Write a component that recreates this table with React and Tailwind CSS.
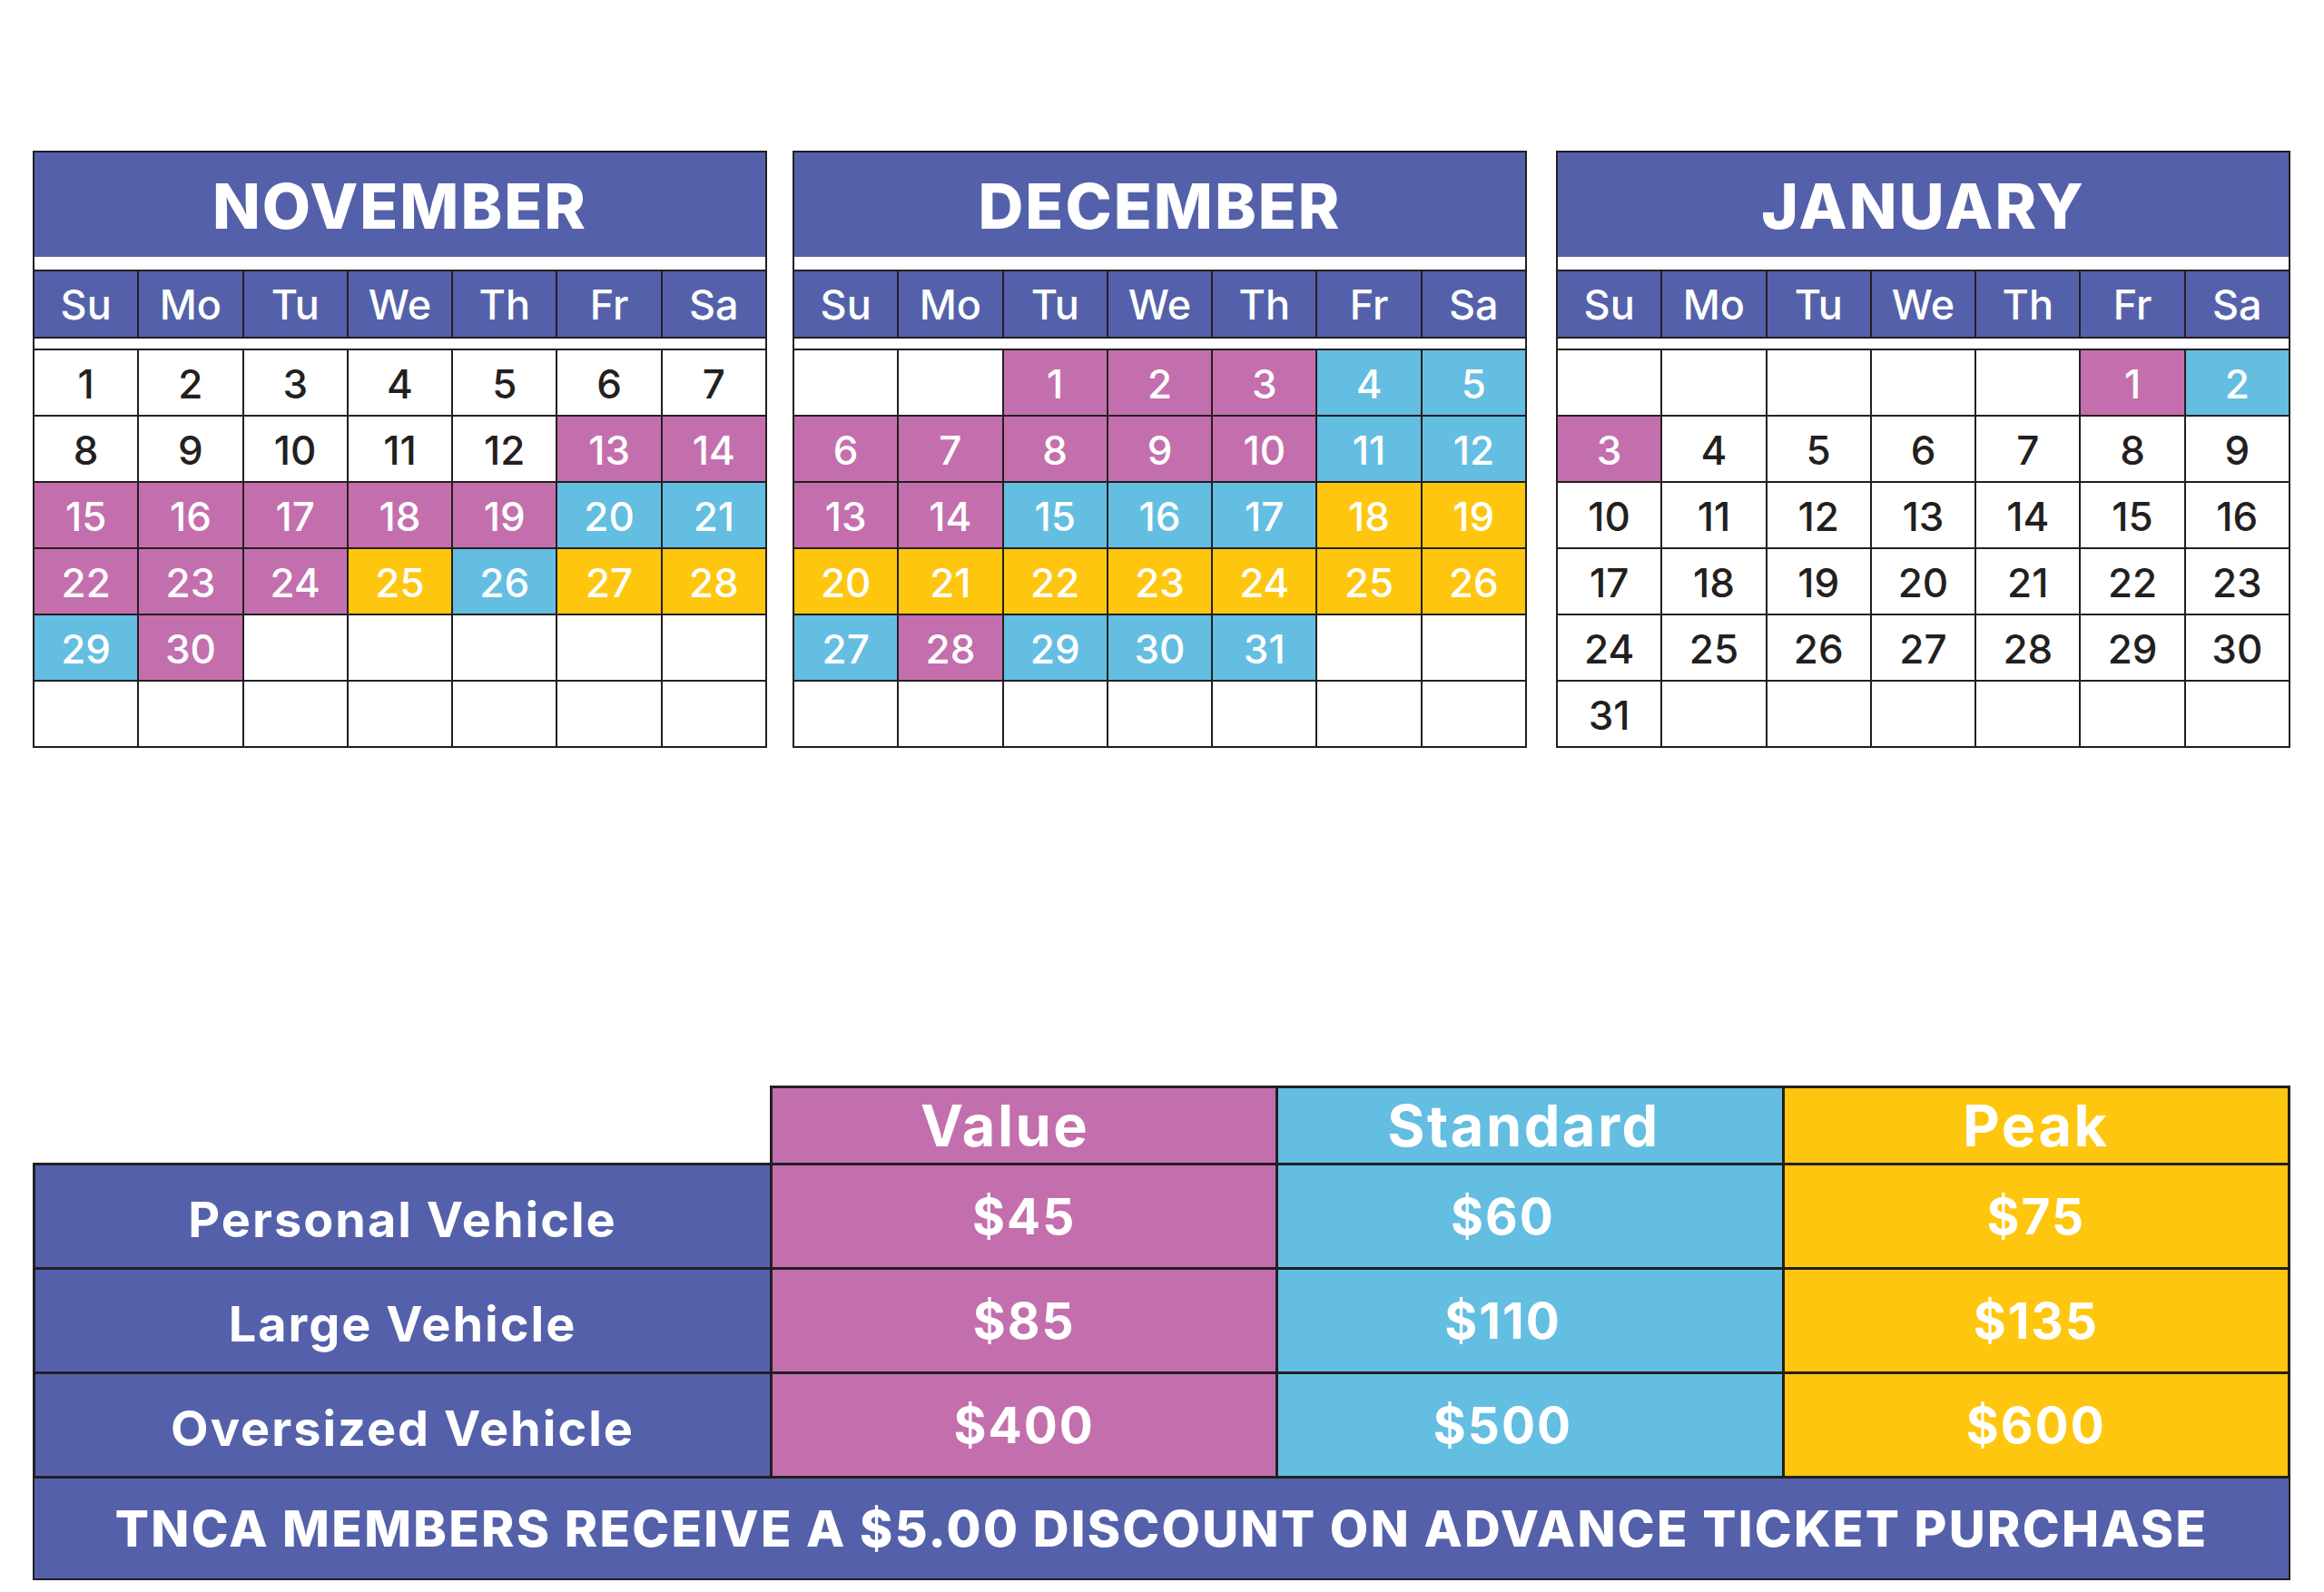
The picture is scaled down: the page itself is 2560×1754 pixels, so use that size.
const M = 'bg-[#c46fad] text-white'
const C = 'bg-[#63bee1] text-white'
const Y = 'bg-[#fec60e] text-white'
const W = 'bg-white text-[#231f20]'

const DAYS = ['Su', 'Mo', 'Tu', 'We', 'Th', 'Fr', 'Sa']

// each month: first weekday offset, number of days, colour per day (default white)
const MONTHS = [
  {
    name: 'NOVEMBER',
    offset: 0,
    length: 30,
    colors: {
      13: M, 14: M,
      15: M, 16: M, 17: M, 18: M, 19: M, 20: C, 21: C,
      22: M, 23: M, 24: M, 25: Y, 26: C, 27: Y, 28: Y,
      29: C, 30: M,
    },
  },
  {
    name: 'DECEMBER',
    offset: 2,
    length: 31,
    colors: {
      1: M, 2: M, 3: M, 4: C, 5: C,
      6: M, 7: M, 8: M, 9: M, 10: M, 11: C, 12: C,
      13: M, 14: M, 15: C, 16: C, 17: C, 18: Y, 19: Y,
      20: Y, 21: Y, 22: Y, 23: Y, 24: Y, 25: Y, 26: Y,
      27: C, 28: M, 29: C, 30: C, 31: C,
    },
  },
  {
    name: 'JANUARY',
    offset: 5,
    length: 31,
    colors: { 1: M, 2: C, 3: M },
  },
]

function buildCells(month) {
  const cells = []
  for (let i = 0; i < 42; i++) {
    const day = i - month.offset + 1
    if (day >= 1 && day <= month.length) {
      cells.push({ day, cls: month.colors[day] ?? W })
    } else {
      cells.push({ day: null, cls: W })
    }
  }
  return cells
}

function MonthCalendar({ month, className }) {
  const cells = buildCells(month)
  return (
    <div className={`w-[809px] shrink-0 border-2 border-[#231f20] bg-white ${className}`}>
      <div className="flex h-[115px] items-center justify-center bg-[#5461aa] pt-[4px]">
        <span className="text-[69px] font-extrabold leading-none tracking-[2px] text-white">
          {month.name}
        </span>
      </div>
      <div className="h-[14px] bg-white" />
      <div className="grid grid-cols-7 gap-[2px] border-y-2 border-[#231f20] bg-[#231f20]">
        {DAYS.map((d) => (
          <div
            key={d}
            className="flex h-[72px] items-center justify-center bg-[#5461aa] pt-[2px] text-[45px] font-medium text-white"
          >
            {d}
          </div>
        ))}
      </div>
      <div className="h-[11px] bg-white" />
      <div className="grid grid-cols-7 gap-[2px] border-t-2 border-[#231f20] bg-[#231f20]">
        {cells.map((c, i) => (
          <div
            key={i}
            className={`flex h-[71px] items-center justify-center pt-[2px] text-[44px] font-medium ${c.cls}`}
          >
            {c.day}
          </div>
        ))}
      </div>
    </div>
  )
}

const ROWS = [
  { label: 'Personal Vehicle', prices: ['$45', '$60', '$75'] },
  { label: 'Large Vehicle', prices: ['$85', '$110', '$135'] },
  { label: 'Oversized Vehicle', prices: ['$400', '$500', '$600'] },
]

// the artwork's labels are not quite centred in the Value / Standard columns
const TIERS = [
  { name: 'Value', cls: 'bg-[#c46fad]', head: 'pr-[42px]', price: '' },
  { name: 'Standard', cls: 'bg-[#63bee1]', head: 'pr-[14px]', price: 'pr-[60px]' },
  { name: 'Peak', cls: 'bg-[#fec60e]', head: '', price: '' },
]

function PriceTable() {
  return (
    <div className="ml-[36px] mt-[372px] w-[2487px]">
      <div className="flex">
        <div className="w-[812px] shrink-0" />
        <div className="grid flex-1 grid-cols-3 gap-[3px] border-[3px] border-b-0 border-[#231f20] bg-[#231f20]">
          {TIERS.map((t) => (
            <div
              key={t.name}
              className={`flex h-[82px] items-center justify-center text-[63px] font-bold tracking-[2.5px] text-white ${t.cls} ${t.head}`}
            >
              {t.name}
            </div>
          ))}
        </div>
      </div>
      <div className="grid grid-cols-[809px_1fr_1fr_1fr] gap-[3px] border-[3px] border-[#231f20] bg-[#231f20]">
        {ROWS.map((row) => (
          <div key={row.label} className="contents">
            <div className="flex h-[112px] items-center justify-center bg-[#5461aa] pt-[6px] text-[54px] font-bold tracking-[2px] text-white">
              {row.label}
            </div>
            {row.prices.map((p, i) => (
              <div
                key={p}
                className={`flex h-[112px] items-center justify-center text-[55px] font-bold tracking-[2px] text-white ${TIERS[i].cls} ${TIERS[i].price}`}
              >
                {p}
              </div>
            ))}
          </div>
        ))}
      </div>
      <div className="flex h-[112px] items-center justify-center border-2 border-t-0 border-[#231f20] bg-[#5461aa] text-[55px] font-extrabold tracking-[2.3px] text-white">
        TNCA MEMBERS RECEIVE A $5.00 DISCOUNT ON ADVANCE TICKET PURCHASE
      </div>
    </div>
  )
}

export default function App() {
  return (
    <div className="h-[1754px] w-[2560px] overflow-hidden bg-white pt-[166px] font-['Inter','Liberation_Sans',sans-serif]">
      <div className="flex pl-[36px]">
        <MonthCalendar month={MONTHS[0]} />
        <MonthCalendar month={MONTHS[1]} className="ml-[28px]" />
        <MonthCalendar month={MONTHS[2]} className="ml-[32px]" />
      </div>
      <PriceTable />
    </div>
  )
}
